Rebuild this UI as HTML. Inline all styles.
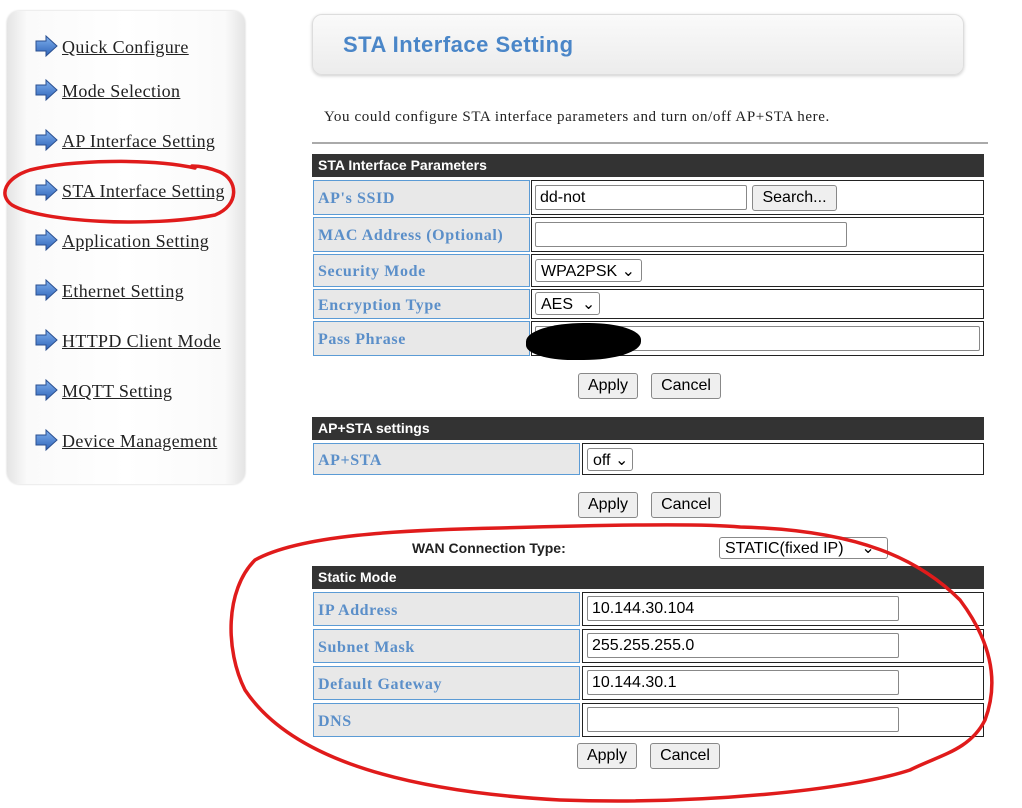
<!DOCTYPE html>
<html><head><meta charset="utf-8"><style>
*{box-sizing:border-box}
body{margin:0;width:1022px;height:808px;background:#fff;position:relative;overflow:hidden;font-family:"Liberation Sans",sans-serif}
.a{position:absolute}
.side{left:7px;top:11px;width:238px;height:473px;border-radius:12px;background:linear-gradient(90deg,#e4e4e4 0,#fafafa 20px,#fff 50%,#fafafa calc(100% - 20px),#e4e4e4 100%);box-shadow:0 0 2px #ccc}
.lk{left:62px;font-family:"Liberation Serif",serif;font-size:18px;letter-spacing:0.35px;color:#222;text-decoration:underline;line-height:20px}
.hdr{left:312px;top:14px;width:652px;height:61px;border-radius:10px;border:1px solid #ddd;background:linear-gradient(#fafafa,#ececec);box-shadow:0 1px 3px #ccc}
.bar{left:312px;width:672px;height:23px;background:#333;color:#fff;font-weight:bold;font-size:14px;line-height:23px;padding-left:6px}
.lb{left:313px;background:#e8e8e8;border:1px solid #5b9bd5;font-family:"Liberation Serif",serif;font-weight:bold;color:#5b8fc9;font-size:16px;letter-spacing:0.6px;padding-left:4px;padding-top:3px;display:flex;align-items:center}
.vc{border:1px solid #222;background:#fff}
.in{border:1px solid #888;border-radius:2px;background:#fff;font-size:16px;padding-left:4px;display:flex;align-items:center;height:25px}
.sel{border:1px solid #888;border-radius:3px;background:#fff;font-size:16px;padding-left:5px;display:flex;align-items:center;height:23px}
.btn{border:1px solid #888;border-radius:3px;background:#efefef;font-size:16px;display:flex;align-items:center;justify-content:center;height:26px}
</style></head><body>
<div class="a side"></div>
<svg width="0" height="0" style="position:absolute"><defs><linearGradient id="g" x1="0" y1="0" x2="0" y2="1"><stop offset="0" stop-color="#7fb0ee"/><stop offset="1" stop-color="#2f64b8"/></linearGradient></defs></svg>
<div class="a lk" style="top:37px">Quick Configure</div>
<div class="a lk" style="top:81px">Mode Selection</div>
<div class="a lk" style="top:131px">AP Interface Setting</div>
<div class="a lk" style="top:181px">STA Interface Setting</div>
<div class="a lk" style="top:231px">Application Setting</div>
<div class="a lk" style="top:281px">Ethernet Setting</div>
<div class="a lk" style="top:331px">HTTPD Client Mode</div>
<div class="a lk" style="top:381px">MQTT Setting</div>
<div class="a lk" style="top:431px">Device Management</div>
<svg class="a" style="left:0;top:0" width="60" height="460">
<g fill="url(#g)" stroke="#2a4f90" stroke-width="1">
<path id="p" d="M36 41h10v-5l11 10-11 10v-5h-10z"/>
<use href="#p" y="44"/><use href="#p" y="94"/><use href="#p" y="144"/><use href="#p" y="194"/><use href="#p" y="244"/><use href="#p" y="294"/><use href="#p" y="344"/><use href="#p" y="394"/>
</g></svg>
<div class="a hdr"></div>
<div class="a" style="left:343px;top:32px;font-size:22px;letter-spacing:0.5px;font-weight:bold;color:#4a86c8">STA Interface Setting</div>
<div class="a" style="left:324px;top:109px;font-family:'Liberation Serif',serif;font-size:15px;letter-spacing:0.6px;color:#222">You could configure STA interface parameters and turn on/off AP+STA here.</div>
<div class="a" style="left:312px;top:142px;width:676px;height:2px;background:#aaa"></div>

<div class="a bar" style="top:154px">STA Interface Parameters</div>
<div class="a lb" style="top:180px;width:217px;height:35px">AP's SSID</div>
<div class="a vc" style="left:531px;top:180px;width:453px;height:35px"></div>
<div class="a in" style="left:535px;top:185px;width:212px">dd-not</div>
<div class="a btn" style="left:752px;top:185px;width:85px;height:26px">Search...</div>
<div class="a lb" style="top:217px;width:217px;height:35px">MAC Address (Optional)</div>
<div class="a vc" style="left:531px;top:217px;width:453px;height:35px"></div>
<div class="a in" style="left:535px;top:222px;width:312px"></div>
<div class="a lb" style="top:254px;width:217px;height:33px">Security Mode</div>
<div class="a vc" style="left:531px;top:254px;width:453px;height:33px"></div>
<div class="a sel" style="left:535px;top:259px;width:107px">WPA2PSK ⌄</div>
<div class="a lb" style="top:289px;width:217px;height:30px">Encryption Type</div>
<div class="a vc" style="left:531px;top:289px;width:453px;height:30px"></div>
<div class="a sel" style="left:535px;top:292px;width:65px">AES&nbsp; ⌄</div>
<div class="a lb" style="top:321px;width:217px;height:35px">Pass Phrase</div>
<div class="a vc" style="left:531px;top:321px;width:453px;height:35px"></div>
<div class="a in" style="left:535px;top:326px;width:445px"></div>
<div class="a" style="left:526px;top:323px;width:115px;height:37px;background:#000;border-radius:50% 45% 50% 40%"></div>
<div class="a btn" style="left:578px;top:373px;width:60px">Apply</div>
<div class="a btn" style="left:651px;top:373px;width:70px">Cancel</div>

<div class="a bar" style="top:417px">AP+STA settings</div>
<div class="a lb" style="top:443px;width:267px;height:32px">AP+STA</div>
<div class="a vc" style="left:582px;top:443px;width:402px;height:32px"></div>
<div class="a sel" style="left:587px;top:448px;width:46px">off ⌄</div>
<div class="a btn" style="left:578px;top:492px;width:60px">Apply</div>
<div class="a btn" style="left:651px;top:492px;width:70px">Cancel</div>

<div class="a" style="left:412px;top:540px;font-size:14px;font-weight:bold;color:#222">WAN Connection Type:</div>
<div class="a sel" style="left:719px;top:537px;width:169px;height:22px">STATIC(fixed IP)&nbsp;&nbsp;&nbsp; ⌄</div>
<div class="a bar" style="top:566px">Static Mode</div>
<div class="a lb" style="top:592px;width:267px;height:34px">IP Address</div>
<div class="a vc" style="left:582px;top:592px;width:402px;height:34px"></div>
<div class="a in" style="left:587px;top:596px;width:312px">10.144.30.104</div>
<div class="a lb" style="top:629px;width:267px;height:34px">Subnet Mask</div>
<div class="a vc" style="left:582px;top:629px;width:402px;height:34px"></div>
<div class="a in" style="left:587px;top:633px;width:312px">255.255.255.0</div>
<div class="a lb" style="top:666px;width:267px;height:34px">Default Gateway</div>
<div class="a vc" style="left:582px;top:666px;width:402px;height:34px"></div>
<div class="a in" style="left:587px;top:670px;width:312px">10.144.30.1</div>
<div class="a lb" style="top:703px;width:267px;height:34px">DNS</div>
<div class="a vc" style="left:582px;top:703px;width:402px;height:34px"></div>
<div class="a in" style="left:587px;top:707px;width:312px"></div>
<div class="a btn" style="left:577px;top:743px;width:60px">Apply</div>
<div class="a btn" style="left:650px;top:743px;width:70px">Cancel</div>

<svg class="a" style="left:0;top:0" width="1022" height="808" fill="none" stroke="#e01b1b" stroke-width="3.5" stroke-linecap="round">
<path d="M195 168C150 158 70 160 30 170 5 178 -2 195 12 205 40 222 150 228 215 215 240 205 238 180 220 172 210 168 200 166 192 166"/>
<path d="M740 527C700 523 600 525 500 528 400 530 300 535 255 560 225 590 225 650 245 690 285 750 380 790 560 800 700 805 850 790 910 770 940 755 970 750 985 720 1000 680 990 640 960 600 920 560 860 530 740 527"/>
</svg>
</body></html>
